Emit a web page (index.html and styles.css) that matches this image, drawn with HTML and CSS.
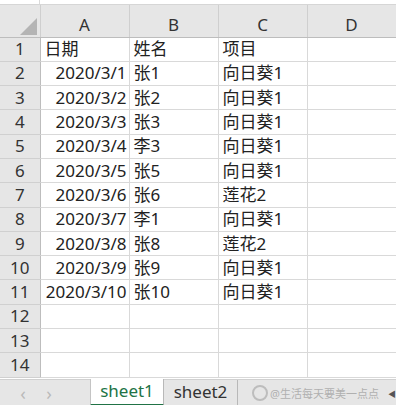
FILE: index.html
```html
<!DOCTYPE html>
<html lang="zh-CN">
<head>
  <meta charset="UTF-8" />
  <title>sheet1</title>
  <link rel="stylesheet" href="styles.css">
</head>
<body>
  <div class="formula-bar">
    <div class="name-box"></div>
    <div class="formula-input"></div>
  </div>

  <table class="sheet">
    <thead>
      <tr>
        <th class="corner"><span class="tri"></span></th>
        <th>A</th>
        <th>B</th>
        <th>C</th>
        <th>D</th>
      </tr>
    </thead>
    <tbody>
      <tr><th>1</th><td>日期</td><td>姓名</td><td>项目</td><td></td></tr>
      <tr><th>2</th><td class="num">2020/3/1</td><td>张1</td><td>向日葵1</td><td></td></tr>
      <tr><th>3</th><td class="num">2020/3/2</td><td>张2</td><td>向日葵1</td><td></td></tr>
      <tr><th>4</th><td class="num">2020/3/3</td><td>张3</td><td>向日葵1</td><td></td></tr>
      <tr><th>5</th><td class="num">2020/3/4</td><td>李3</td><td>向日葵1</td><td></td></tr>
      <tr><th>6</th><td class="num">2020/3/5</td><td>张5</td><td>向日葵1</td><td></td></tr>
      <tr><th>7</th><td class="num">2020/3/6</td><td>张6</td><td>莲花2</td><td></td></tr>
      <tr><th>8</th><td class="num">2020/3/7</td><td>李1</td><td>向日葵1</td><td></td></tr>
      <tr><th>9</th><td class="num">2020/3/8</td><td>张8</td><td>莲花2</td><td></td></tr>
      <tr><th>10</th><td class="num">2020/3/9</td><td>张9</td><td>向日葵1</td><td></td></tr>
      <tr><th>11</th><td class="num">2020/3/10</td><td>张10</td><td>向日葵1</td><td></td></tr>
      <tr><th>12</th><td></td><td></td><td></td><td></td></tr>
      <tr><th>13</th><td></td><td></td><td></td><td></td></tr>
      <tr><th>14</th><td></td><td></td><td></td><td></td></tr>
    </tbody>
  </table>

  <div class="tabs">
    <div class="nav">
      <span class="arrow">&#x2039;</span>
      <span class="arrow">&#x203A;</span>
    </div>
    <div class="tab active">sheet1</div>
    <div class="tab">sheet2</div>
    <div class="watermark">
      <span class="wm-logo"></span>
      <span>@生活每天要美一点点</span>
    </div>
    <span class="more">&#x25C0;</span>
  </div>
</body>
</html>
```

FILE: styles.css
```css
* {
  margin: 0;
  padding: 0;
  box-sizing: border-box;
}

body {
  width: 396px;
  height: 405px;
  overflow: hidden;
  background: #ffffff;
  font-family: 'Noto Sans', 'Noto Sans CJK SC', sans-serif;
  color: #222222;
}

.formula-bar {
  display: flex;
  height: 5px;
  border-bottom: 1px solid #d6d6d6;
}

.name-box {
  width: 40px;
  border-right: 1px solid #dadada;
}

.formula-input {
  flex: 1;
}

.sheet {
  border-collapse: collapse;
  table-layout: fixed;
  width: 396px;
}

.sheet th,
.sheet td {
  height: 24.3px;
  font-size: 17px;
  line-height: 20px;
  font-weight: 400;
  white-space: nowrap;
  overflow: hidden;
}

.sheet thead th {
  height: 32px;
  padding-top: 9px;
  background: #e6e6e6;
  color: #333333;
  border-right: 1px solid #cfcfcf;
  border-bottom: 1px solid #bdbdbd;
  width: 89px;
  text-align: center;
}

.sheet thead th.corner {
  width: 40px;
  position: relative;
}

.tri {
  position: absolute;
  right: 3px;
  bottom: 2px;
  width: 0;
  height: 0;
  border-left: 17px solid transparent;
  border-bottom: 17px solid #b4b4b4;
}

.sheet tbody th {
  background: #e6e6e6;
  color: #333333;
  text-align: center;
  border-right: 1px solid #bdbdbd;
  border-bottom: 1px solid #d0d0d0;
}

.sheet td {
  padding: 0 4px;
  border-right: 1px solid #d9d9d9;
  border-bottom: 1px solid #d9d9d9;
  text-align: left;
}

.sheet td.num {
  text-align: right;
  padding-right: 2px;
}

.tabs {
  display: flex;
  align-items: stretch;
  height: 27px;
  margin-top: 1px;
  background: #e6e6e6;
  border-top: 1px solid #d0d0d0;
}

.nav {
  width: 90px;
  display: flex;
  gap: 16px;
  padding-left: 18px;
  align-items: center;
}

.arrow {
  width: 10px;
  color: #b9b9b9;
  font-size: 18px;
  line-height: 18px;
  text-align: center;
}

.tab {
  width: 74px;
  font-size: 17px;
  line-height: 24px;
  text-align: center;
  color: #333333;
  border-right: 1px solid #b8b8b8;
}

.tab.active {
  background: #ffffff;
  color: #217346;
  border-left: 1px solid #c4c4c4;
  border-bottom: 2px solid #217346;
  margin-top: -1px;
}

.watermark {
  display: flex;
  align-items: center;
  gap: 2px;
  padding-left: 14px;
  font-size: 11px;
  color: #b0b0b0;
  white-space: nowrap;
}

.wm-logo {
  width: 16px;
  height: 16px;
  border: 2px solid #bdbdbd;
  border-radius: 50%;
  flex: none;
}

.more {
  margin-left: auto;
  font-size: 8px;
  line-height: 27px;
  color: #555555;
}
```
